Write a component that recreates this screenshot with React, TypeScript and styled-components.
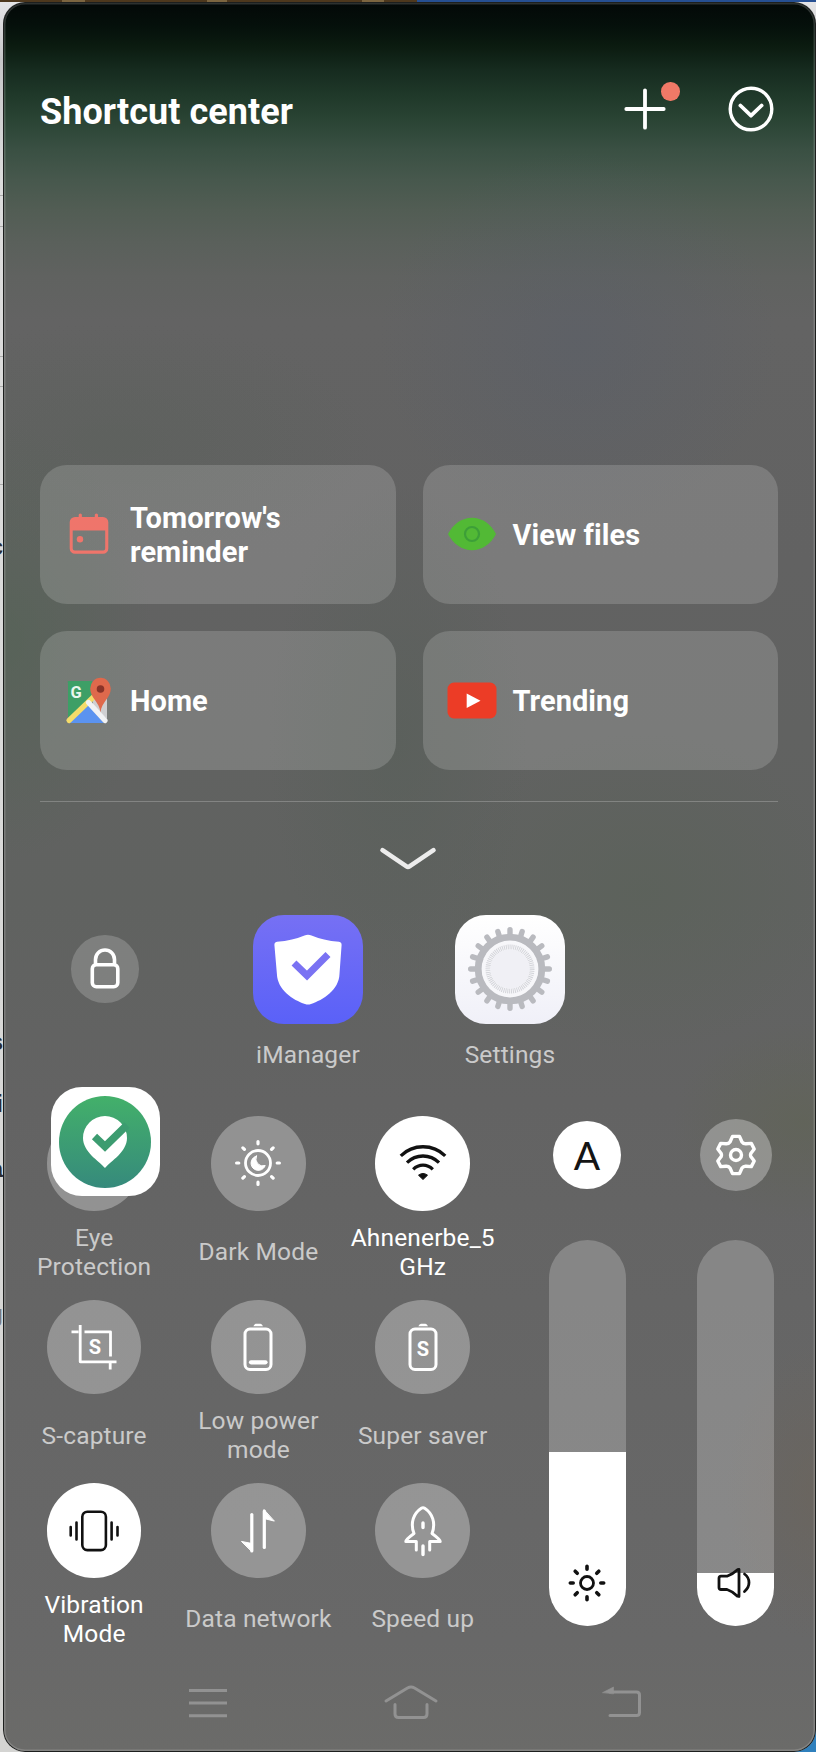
import React from "react";
import styled, { createGlobalStyle } from "styled-components";

const GlobalStyle = createGlobalStyle`
  * { box-sizing: border-box; }
  body { margin: 0; font-family: Roboto, "Liberation Sans", sans-serif; }
  svg { display: block; flex: none; overflow: visible; }
`;

const Desktop = styled.div`
  width: 816px;
  height: 1752px;
  display: flex;
  flex-direction: column;
  overflow: hidden;
  background: linear-gradient(90deg, transparent 60%, #2f80bd 60%) 0 100% / 100% 60px no-repeat,
    linear-gradient(#e6e6e8 0, #c6c6c8 60px, #dcdcdc 180px, #d4d4d2 100%);
`;

const WindowStrip = styled.div`
  height: 2px;
  flex: none;
  background: linear-gradient(90deg, #4e381d 0 62px, #7c6540 62px 85px, #4e381d 85px 207px, #7c6540 207px 227px,
    #4e381d 227px 362px, #7c6540 362px 384px, #4e381d 384px 417px, #264f92 417px);
`;

const Body = styled.div`
  flex: 1;
  display: flex;
  min-height: 0;
`;

const PageEdge = styled.div`
  width: 3px;
  overflow: hidden;
  display: flex;
  flex-direction: column;
  align-items: flex-end;
`;

const EdgeRule = styled.div<{ $gap: number }>`
  width: 3px;
  height: 1px;
  flex: none;
  margin-top: ${(p) => p.$gap}px;
  background: #aaa;
`;

const EdgeLetter = styled.span<{ $gap: number; $color?: string }>`
  height: 26px;
  flex: none;
  margin-top: ${(p) => p.$gap}px;
  font: 700 24px/26px "Liberation Sans", sans-serif;
  color: ${(p) => p.$color ?? "#2b2b30"};
`;

const Phone = styled.main`
  width: 813px;
  height: 1750px;
  border-radius: 22px;
  overflow: hidden;
  display: flex;
  flex-direction: column;
  padding: 0 37px;
  box-shadow: inset 0 0 0 1px #1d1f1e, inset 0 0 0 2.5px rgba(255, 255, 255, 0.17);
  background:
    radial-gradient(200px 190px at 575px 340px, rgba(84, 92, 108, 0.35), transparent),
    radial-gradient(150px 220px at 0 640px, rgba(78, 100, 80, 0.5), transparent),
    radial-gradient(260px 120px at 110px 440px, rgba(88, 96, 88, 0.4), transparent),
    radial-gradient(130px 260px at 395px 740px, rgba(84, 94, 86, 0.45), transparent),
    radial-gradient(200px 160px at 640px 890px, rgba(88, 98, 86, 0.45), transparent),
    radial-gradient(130px 100px at 800px 1120px, rgba(96, 100, 84, 0.6), transparent),
    radial-gradient(90px 150px at 813px 1490px, rgba(108, 100, 90, 0.6), transparent),
    linear-gradient(#030807 0, #05100b 24px, #0b1b10 44px, #162b1f 68px, #1f3829 92px, #2a4434 118px,
      #3a5043 148px, #47584d 178px, #525d54 208px, #5a605b 240px, #606260 275px, #636363 320px,
      #626262 560px, #606260 900px, #636363 1100px, #666 1400px, #686868 1640px, #6b6b69 100%);
`;

const Header = styled.header`
  height: 214px;
  flex: none;
  display: flex;
  align-items: center;
  padding-right: 5px;
`;

const Title = styled.h1`
  margin: 6px auto 0 0;
  font-size: 36px;
  line-height: 42px;
  font-weight: 700;
  letter-spacing: 0.05px;
  color: #fff;
`;

const AddButton = styled.div`
  position: relative;
  margin-right: 62px;
`;

const Badge = styled.span`
  position: absolute;
  left: 37px;
  top: -6px;
  width: 18.5px;
  height: 18.5px;
  border-radius: 50%;
  background: #f07967;
`;

const CardGrid = styled.section`
  margin-top: 248.5px;
  display: grid;
  grid-template-columns: 355.5px 355.5px;
  gap: 27px 27px;
`;

const Card = styled.div`
  height: 139px;
  border-radius: 27px;
  background: rgba(255, 255, 255, 0.16);
  display: flex;
  align-items: center;
  gap: 16px;
  padding-left: 24px;
`;

const CardIcon = styled.div`
  width: 50px;
  display: flex;
  justify-content: center;
`;

const CardLabel = styled.div`
  width: 200px;
  padding-top: 2.5px;
  font-size: 29px;
  line-height: 34.3px;
  font-weight: 700;
  letter-spacing: 0.05px;
  color: #fff;
`;

const Divider = styled.div`
  width: 738px;
  height: 1.5px;
  flex: none;
  margin-top: 31px;
  background: rgba(255, 255, 255, 0.22);
`;

const Expander = styled.div`
  height: 112.5px;
  flex: none;
  display: flex;
  justify-content: center;
  padding: 43.5px 3px 0 0;
`;

const AppRow = styled.section`
  height: 201.5px;
  flex: none;
  display: grid;
  grid-template-columns: 130px 276px 128px;
`;

const LockCell = styled.div`
  display: flex;
  height: 109px;
  align-items: center;
  padding-left: 31px;
`;

const Round = styled.div<{ $size: number; $on?: boolean }>`
  width: ${(p) => p.$size}px;
  height: ${(p) => p.$size}px;
  flex: none;
  border-radius: 50%;
  display: flex;
  align-items: center;
  justify-content: center;
  color: ${(p) => (p.$on ? "#111" : "#fff")};
  background: ${(p) => (p.$on ? "#fff" : "rgba(255, 255, 255, 0.3)")};
`;

const LockRound = styled(Round)`
  background: rgba(255, 255, 255, 0.19);
`;

const AppEntry = styled.div`
  display: flex;
  flex-direction: column;
  align-items: center;
`;

const AppTile = styled.div<{ $bg: string }>`
  width: 109.5px;
  height: 109px;
  border-radius: 31px;
  display: flex;
  align-items: center;
  justify-content: center;
  background: ${(p) => p.$bg};
`;

const Label = styled.div<{ $on?: boolean }>`
  font-size: 24.5px;
  line-height: 29.2px;
  letter-spacing: 0.15px;
  text-align: center;
  white-space: pre-line;
  color: ${(p) => (p.$on ? "#fff" : "#cacaca")};
`;

const AppLabel = styled(Label)`
  margin-top: 16px;
`;

const Controls = styled.section`
  height: 551px;
  flex: none;
  display: flex;
`;

const ToggleGrid = styled.div`
  width: 493px;
  margin-left: -28px;
  display: grid;
  grid-template-columns: repeat(3, 164.3px);
  grid-auto-rows: 183.7px;
`;

const Toggle = styled.div`
  position: relative;
  display: flex;
  flex-direction: column;
  align-items: center;
`;

const ToggleLabel = styled(Label)`
  height: 58.4px;
  margin-top: 12px;
  display: flex;
  align-items: center;
`;

const FloatingTile = styled(AppTile)`
  position: absolute;
  left: 38.5px;
  top: -29px;
`;

const SliderColumn = styled.div<{ $left: number }>`
  width: 77px;
  margin-left: ${(p) => p.$left}px;
  display: flex;
  flex-direction: column;
  align-items: center;
`;

const SliderHead = styled.div`
  height: 77px;
  display: flex;
  align-items: center;
`;

const AutoLetter = styled.span`
  font-family: Lato, "Liberation Sans", sans-serif;
  font-size: 39px;
  line-height: 40px;
  font-weight: 400;
  color: #141414;
`;

const Track = styled.div`
  width: 77px;
  height: 386px;
  margin-top: 46.5px;
  border-radius: 38.5px;
  overflow: hidden;
  display: flex;
  align-items: flex-end;
  background: rgba(255, 255, 255, 0.22);
`;

const Fill = styled.div<{ $height: number; $lift: number }>`
  width: 100%;
  height: ${(p) => p.$height}px;
  background: #fff;
  display: flex;
  align-items: flex-end;
  justify-content: center;
  padding-bottom: ${(p) => p.$lift}px;
`;

const NavBar = styled.nav`
  flex: 1;
  display: flex;
  padding: 16px 0 0 148.5px;
  color: #929292;
`;

const NavItem = styled.div<{ $gap: number }>`
  margin-right: ${(p) => p.$gap}px;
`;

const stroke = {
  fill: "none",
  stroke: "currentColor",
  strokeLinecap: "round" as const,
  strokeLinejoin: "round" as const,
};

const rays = (n: number, r1: number, r2: number, offset = 0) =>
  Array.from({ length: n }, (_, i) => {
    const a = (i * 2 * Math.PI) / n + offset;
    const c = Math.cos(a);
    const s = Math.sin(a);
    return `M${(c * r1).toFixed(2)} ${(s * r1).toFixed(2)}L${(c * r2).toFixed(2)} ${(s * r2).toFixed(2)}`;
  }).join("");

const CalendarIcon = () => (
  <svg width="40" height="42" viewBox="0 0 40 42" fill="#ef756b">
    <rect x="9.7" y="0.5" width="3.2" height="7" rx="1.6" />
    <rect x="25.8" y="0.5" width="3.2" height="7" rx="1.6" />
    <path d="M6 4H34a5.3 5.3 0 0 1 5.3 5.3V35.5a5.3 5.3 0 0 1-5.3 5.3H6A5.3 5.3 0 0 1 .7 35.5V9.3A5.3 5.3 0 0 1 6 4ZM3.7 17.5V35.5a2 2 0 0 0 2 2H34.2a2 2 0 0 0 2-2V17.5Z" fillRule="evenodd" />
    <circle cx="11" cy="26.3" r="3.2" />
  </svg>
);

const EyeIcon = () => (
  <svg width="50" height="34" viewBox="0 0 50 34">
    <path d="M1 17C6 7 15 .8 25 .8S44 7 49 17C44 27 35 33.2 25 33.2S6 27 1 17Z" fill="#52b935" />
    <circle cx="25" cy="17" r="7" fill="none" stroke="#3d9f38" strokeWidth="2.2" />
  </svg>
);

const MapsIcon = () => (
  <svg width="46" height="47" viewBox="0 0 46 47">
    <path d="M2.8 4H26L28 20 2 44V6Q1 4 2.8 4Z" fill="#3d9f66" />
    <path d="M26 17 41 15V42L27 28Z" fill="#cfcfd1" />
    <path d="M20.500 26 38 46H4Z" fill="#5b93f0" />
    <path d="M3 43.500 28 19.500" stroke="#f5dc6a" strokeWidth="5.200" strokeLinecap="round" fill="none" />
    <path d="M22.500 25.500 39 43.500" stroke="#f1f2f4" strokeWidth="5.200" strokeLinecap="round" fill="none" />
    <path d="M34.500 35.500C33.500 25 24.200 21 24.200 11.600a10.300 10.800 0 0 1 20.600 0C44.800 21 35.500 25 34.500 35.500Z" fill="#df694c" />
    <circle cx="34.500" cy="12" r="3.800" fill="#8a3328" />
    <text x="4.500" y="20.500" fontSize="16.500" fontWeight="700" fill="#e9f6ee">G</text>
  </svg>
);

const VideoIcon = () => (
  <svg width="50" height="37" viewBox="0 0 50 37">
    <rect x=".5" y=".5" width="49" height="36" rx="6.500" fill="#ec3c26" />
    <path d="M19.700 11.500 33.500 18.700 19.700 26Z" fill="#fff" />
  </svg>
);

const LockIcon = () => (
  <svg width="30" height="40" viewBox="0 0 30 40" {...stroke} strokeWidth="3.600">
    <path d="M5.500 15.500V10.500a9.500 9.500 0 0 1 19 0V15.500" />
    <rect x="2.300" y="15.700" width="25.500" height="22" rx="4" />
  </svg>
);

const ShieldIcon = () => (
  <svg width="68" height="71" viewBox="0 0 68 71">
    <path d="M30.500 1.400Q34 0 37.500 1.400 49 6.300 65 7.800 67.700 8.300 67.600 11L65.500 40C65 56 49 66 37 70Q34 71 31 70C19 66 3.500 56 2.900 40L.4 11Q.3 8.300 3 7.800 19 6.300 30.500 1.400Z" fill="#fff" />
    <path d="M20 29 33 41.500 54 20.500" fill="none" stroke="#7a72f3" strokeWidth="7" />
  </svg>
);

const GearAppIcon = () => (
  <svg width="88" height="88" viewBox="-44 -44 88 88">
    <path d={rays(20, 33, 39.3)} stroke="#b9babf" strokeWidth="5.400" strokeLinecap="round" />
    <circle r="31.500" fill="none" stroke="#b9babf" strokeWidth="7.500" />
    <circle r="28.400" fill="#f7f7fa" />
    <circle r="22" fill="none" stroke="#d4d5da" strokeWidth="5" strokeDasharray="1 .9" />
    <circle r="19.500" fill="#f0f0f5" />
  </svg>
);

const PinCheckIcon = () => (
  <svg width="92" height="92" viewBox="-46 -46 92 92">
    <defs>
      <linearGradient id="pinGreen" x1="0" y1="0" x2="0" y2="1">
        <stop offset="0" stopColor="#43b06a" />
        <stop offset="1" stopColor="#368a7c" />
      </linearGradient>
    </defs>
    <circle r="46" fill="url(#pinGreen)" />
    <path d="M0 26C-6 19-22 10-22-4a22 22 0 0 1 44 0C22 10 6 19 0 26Z" fill="#fff" />
    <path d="M-10.500-5.500 0 4.500 22-17" fill="none" stroke="#3c9c70" strokeWidth="7.500" />
  </svg>
);

const DarkModeIcon = () => (
  <svg width="46" height="46" viewBox="-23 -23 46 46" {...stroke}>
    <circle r="12.500" strokeWidth="2.800" />
    <path d={rays(8, 19.200, 21.400)} strokeWidth="3.200" />
    <path d="M-1.500-7A7.300 7.300 0 1 0 7.200 2.500A7 7 0 0 1-1.500-7Z" fill="currentColor" strokeWidth="1" />
  </svg>
);

const WifiIcon = () => (
  <svg width="46" height="36" viewBox="0 0 46 36" {...stroke} strokeWidth="3.300" strokeLinecap="butt">
    <path d="M.8 10.800C13-1.300 33-1.300 45.200 10.800" />
    <path d="M7 17.600C16 8.800 30 8.800 39 17.600" />
    <path d="M13.200 24.400C19 18.800 27 18.800 32.800 24.400" />
    <path d="M18.500 30.200Q23 26.800 27.500 30.200L23 34.500Z" fill="currentColor" strokeWidth="1" />
  </svg>
);

const CaptureIcon = () => (
  <svg width="46" height="46" viewBox="0 0 46 46" {...stroke} strokeWidth="2.800" strokeLinecap="butt">
    <path d="M.5 7.800H7.500M9.200 1V37.800H45.500M13.500 7.800H39.500V32.500M39.200 38V45.500" />
    <text x="24" y="30" textAnchor="middle" fontSize="20" fontWeight="700" fill="currentColor" stroke="none">S</text>
  </svg>
);

const BatteryIcon = ({ saver }: { saver?: boolean }) => (
  <svg width="30" height="48" viewBox="0 0 30 48" {...stroke}>
    <path d="M10.300 3.300Q11.500.8 13 .8H17.500Q19 .8 20 3.300Z" fill="currentColor" stroke="none" />
    <rect x="2" y="6" width="26" height="40.500" rx="5" strokeWidth="3" />
    {saver ? (
      <text x="15" y="33" textAnchor="middle" fontSize="20" fontWeight="700" fill="currentColor" stroke="none">S</text>
    ) : (
      <path d="M8 39.300H22.500" strokeWidth="4.200" />
    )}
  </svg>
);

const VibrateIcon = () => (
  <svg width="50" height="42" viewBox="0 0 50 42" {...stroke} strokeWidth="2.600">
    <rect x="13.300" y="1.700" width="23.600" height="38.400" rx="5" />
    <path d="M7.500 12.500V29.500M42.600 12.500V29.500M1.700 17V25.500M48.500 17V25.500" />
  </svg>
);

const DataIcon = () => (
  <svg width="34" height="44" viewBox="0 0 34 44" {...stroke} strokeWidth="3.200">
    <path d="M10.800 5.500V42" />
    <path d="M.8 32.500 11 34.500V42.500Z" fill="currentColor" strokeWidth="1" />
    <path d="M23.300 38.500V2" />
    <path d="M33 12 23 9.500V1Z" fill="currentColor" strokeWidth="1" />
  </svg>
);

const RocketIcon = () => (
  <svg width="38" height="50" viewBox="0 0 38 50" {...stroke} strokeWidth="3">
    <path d="M12.300 44V35.500H1.800Q1.800 33.500 10 27.500C6 17 9.500 7.500 17.300 2.300Q19 1.200 20.700 2.300C28.500 7.500 32 17 28 27.500Q36.200 33.500 36.200 35.500H25.700V44" />
    <path d="M19 17V21.500M19 40V48.500" strokeWidth="3.400" />
  </svg>
);

const ControlGearIcon = () => (
  <svg width="40" height="42" viewBox="-20 -21 40 42" {...stroke} strokeWidth="3.400">
    <path d="M-3.500-18.600H3.500L6-13Q7.500-11 10-11.200L15.300-11.600 18.200-6 14.800-1.500Q14.200 0 14.800 1.500L18.200 6 15.300 11.600 10 11.200Q7.500 11 6 13L3.500 18.600H-3.500L-6 13Q-7.500 11-10 11.200L-15.300 11.600-18.200 6-14.800 1.500Q-14.200 0-14.800-1.500L-18.200-6-15.300-11.600-10-11.200Q-7.500-11-6-13Z" />
    <circle r="5.500" />
  </svg>
);

const SunIcon = () => (
  <svg width="38" height="38" viewBox="-19 -19 38 38" color="#111" {...stroke}>
    <circle r="6.500" strokeWidth="2.800" />
    <path d={rays(8, 13.800, 16.700)} strokeWidth="3.600" />
  </svg>
);

const SpeakerIcon = () => (
  <svg width="37" height="30" viewBox="0 0 37 30" color="#111" {...stroke} strokeWidth="2.800">
    <path d="M4 8.200H10Q16 6 20.500 1.700L22 1.500V28.500L20.500 28.200Q16 23.500 10 21.500H4Q2 21.500 2 19.500V10.200Q2 8.200 4 8.200Z" />
    <path d="M27.500 6C33.500 10.500 33.500 18.500 27.500 23.500" />
  </svg>
);

const toggles: { label: string; icon?: React.ReactNode; on?: boolean; floating?: boolean }[] = [
  { label: "Eye\nProtection", floating: true },
  { label: "Dark Mode", icon: <DarkModeIcon /> },
  { label: "Ahnenerbe_5\nGHz", icon: <WifiIcon />, on: true },
  { label: "S-capture", icon: <CaptureIcon /> },
  { label: "Low power\nmode", icon: <BatteryIcon /> },
  { label: "Super saver", icon: <BatteryIcon saver /> },
  { label: "Vibration\nMode", icon: <VibrateIcon />, on: true },
  { label: "Data network", icon: <DataIcon /> },
  { label: "Speed up", icon: <RocketIcon /> },
];

const cards = [
  { label: "Tomorrow's reminder", icon: <CalendarIcon /> },
  { label: "View files", icon: <EyeIcon /> },
  { label: "Home", icon: <MapsIcon /> },
  { label: "Trending", icon: <VideoIcon /> },
];

export default function App() {
  return (
    <Desktop>
      <GlobalStyle />
      <WindowStrip />
      <Body>
        <PageEdge>
          <EdgeRule $gap={193} />
          <EdgeRule $gap={30} />
          <EdgeRule $gap={129} />
          <EdgeRule $gap={29} />
          <EdgeRule $gap={97} />
          <EdgeLetter $gap={49}>c</EdgeLetter>
          <EdgeLetter $gap={469}>s</EdgeLetter>
          <EdgeLetter $gap={36}>i</EdgeLetter>
          <EdgeLetter $gap={39}>a</EdgeLetter>
          <EdgeLetter $gap={119} $color="#77777a">g</EdgeLetter>
        </PageEdge>
        <Phone>
          <Header>
            <Title>Shortcut center</Title>
            <AddButton>
              <svg width="42" height="42" viewBox="-21 -21 42 42" color="#fff" {...stroke} strokeWidth="3.800">
                <path d="M-18.700 0H18.700M0-18.700V18.700" />
              </svg>
              <Badge />
            </AddButton>
            <svg width="46" height="46" viewBox="-23 -23 46 46" color="#fff" {...stroke} strokeWidth="3.400">
              <circle r="20.800" />
              <path d="M-10.600-3.500 0 6.700 10.600-3.500" strokeWidth="3.800" />
            </svg>
          </Header>
          <CardGrid>
            {cards.map((c) => (
              <Card key={c.label}>
                <CardIcon>{c.icon}</CardIcon>
                <CardLabel>{c.label}</CardLabel>
              </Card>
            ))}
          </CardGrid>
          <Divider />
          <Expander>
            <svg width="58" height="26" viewBox="0 0 58 26" color="#ececec" {...stroke} strokeWidth="4.600">
              <path d="M3.500 4.200 27.500 20.300Q29 21.300 30.500 20.300L54.500 4.200" />
            </svg>
          </Expander>
          <AppRow>
            <LockCell>
              <LockRound $size={67.5}>
                <LockIcon />
              </LockRound>
            </LockCell>
            <AppEntry>
              <AppTile $bg="linear-gradient(#7670f4, #5a61f8)">
                <ShieldIcon />
              </AppTile>
              <AppLabel>iManager</AppLabel>
            </AppEntry>
            <AppEntry>
              <AppTile $bg="linear-gradient(#fff, #f0f0f8)">
                <GearAppIcon />
              </AppTile>
              <AppLabel>Settings</AppLabel>
            </AppEntry>
          </AppRow>
          <Controls>
            <ToggleGrid>
              {toggles.map((t) => (
                <Toggle key={t.label}>
                  <Round $size={94.5} $on={t.on}>
                    {t.icon}
                  </Round>
                  {t.floating && (
                    <FloatingTile $bg="#fff">
                      <PinCheckIcon />
                    </FloatingTile>
                  )}
                  <ToggleLabel $on={t.on}>{t.label}</ToggleLabel>
                </Toggle>
              ))}
            </ToggleGrid>
            <SliderColumn $left={43.5}>
              <SliderHead>
                <Round $size={68} $on>
                  <AutoLetter>A</AutoLetter>
                </Round>
              </SliderHead>
              <Track>
                <Fill $height={174} $lift={24}>
                  <SunIcon />
                </Fill>
              </Track>
            </SliderColumn>
            <SliderColumn $left={71.5}>
              <SliderHead>
                <Round $size={72}>
                  <ControlGearIcon />
                </Round>
              </SliderHead>
              <Track>
                <Fill $height={52.5} $lift={27.5}>
                  <SpeakerIcon />
                </Fill>
              </Track>
            </SliderColumn>
          </Controls>
          <NavBar>
            <NavItem $gap={157}>
              <svg width="38" height="40" viewBox="0 0 38 40" {...stroke} strokeWidth="3" strokeLinecap="butt">
                <path d="M0 7.500H38M0 20.100H38M0 32.700H38" />
              </svg>
            </NavItem>
            <NavItem $gap={164.5}>
              <svg width="54" height="40" viewBox="0 0 54 40" {...stroke} strokeWidth="3">
                <path d="M2 18 23.500 5Q27 3 30.500 5L52 18" />
                <path d="M11 21.500V31Q11 34.500 14.500 34.500H39.500Q43 34.500 43 31V21.500" />
              </svg>
            </NavItem>
            <NavItem $gap={0}>
              <svg width="40" height="40" viewBox="0 0 40 40" {...stroke} strokeWidth="3">
                <path d="M8 9H34.500Q37.500 9 37.500 12V29.500Q37.500 32.500 34.500 32.500H8" />
                <path d="M.8 9.500 11.500 4V10.500Z" fill="currentColor" strokeWidth=".6" />
              </svg>
            </NavItem>
          </NavBar>
        </Phone>
      </Body>
    </Desktop>
  );
}
